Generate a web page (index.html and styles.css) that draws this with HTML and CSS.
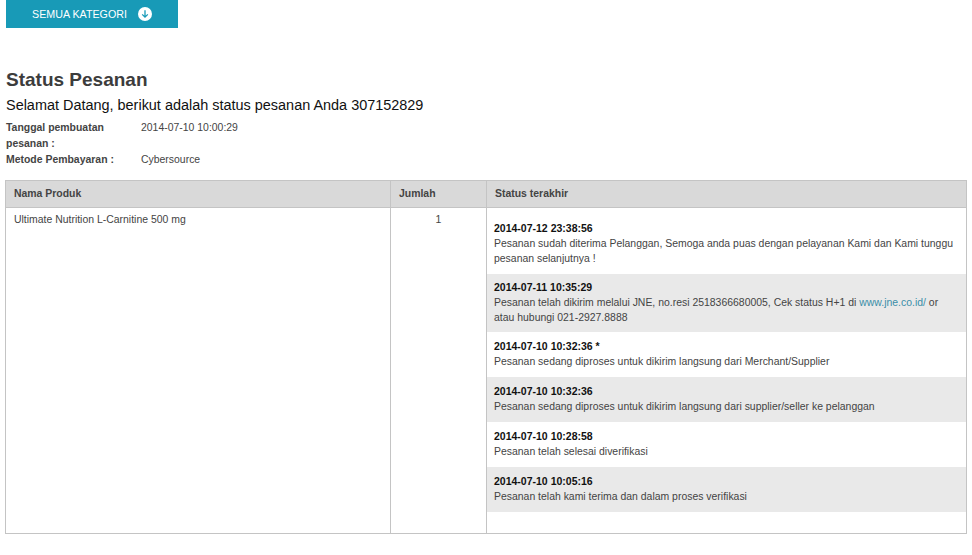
FILE: index.html
```html
<!DOCTYPE html>
<html lang="id">
<head>
<meta charset="utf-8">
<title>Status Pesanan</title>
<link rel="stylesheet" href="styles.css">
</head>
<body>
<div class="page">
  <a class="cat-btn" href="#">
    <span>SEMUA KATEGORI</span>
    <svg class="cat-icon" width="14" height="14" viewBox="0 0 14 14" aria-hidden="true">
      <circle cx="7" cy="7" r="7" fill="#fff"/>
      <path d="M7 3.2V10M4.2 7.4 7 10.2 9.8 7.4" fill="none" stroke="#189ab7" stroke-width="1.3"/>
    </svg>
  </a>
  <h1 class="title">Status Pesanan</h1>
  <p class="welcome">Selamat Datang, berikut adalah status pesanan Anda 307152829</p>
  <dl class="meta">
    <dt>Tanggal pembuatan pesanan :</dt>
    <dd>2014-07-10 10:00:29</dd>
    <dt>Metode Pembayaran :</dt>
    <dd>Cybersource</dd>
  </dl>
  <table class="orders">
    <colgroup>
      <col class="col-name"><col class="col-qty"><col>
    </colgroup>
    <thead>
      <tr><th>Nama Produk</th><th>Jumlah</th><th>Status terakhir</th></tr>
    </thead>
    <tbody>
      <tr>
        <td class="cell">Ultimate Nutrition L-Carnitine 500 mg</td>
        <td class="cell qty">1</td>
        <td class="status-cell">
          <div class="status long"><strong>2014-07-12 23:38:56</strong><p>Pesanan sudah diterima Pelanggan, Semoga anda puas dengan pelayanan Kami dan Kami tunggu pesanan selanjutnya !</p></div>
          <div class="status long alt"><strong>2014-07-11 10:35:29</strong><p>Pesanan telah dikirim melalui JNE, no.resi 2518366680005, Cek status H+1 di <a href="#">www.jne.co.id/</a> or atau hubungi 021-2927.8888</p></div>
          <div class="status"><strong>2014-07-10 10:32:36 *</strong><p>Pesanan sedang diproses untuk dikirim langsung dari Merchant/Supplier</p></div>
          <div class="status alt"><strong>2014-07-10 10:32:36</strong><p>Pesanan sedang diproses untuk dikirim langsung dari supplier/seller ke pelanggan</p></div>
          <div class="status"><strong>2014-07-10 10:28:58</strong><p>Pesanan telah selesai diverifikasi</p></div>
          <div class="status alt"><strong>2014-07-10 10:05:16</strong><p>Pesanan telah kami terima dan dalam proses verifikasi</p></div>
        </td>
      </tr>
    </tbody>
  </table>
</div>
</body>
</html>
```
FILE: styles.css
```css
html, body { margin: 0; padding: 0; background: #fff; }
body { font-family: "Liberation Sans", Arial, sans-serif; font-size: 10.45px; color: #444; }
.page { padding: 0 5px; height: 555px; box-sizing: border-box; overflow: hidden; }
.cat-btn { margin-left: 1px; width: 172px; height: 28px; background: #189ab7; color: #fff; display: flex; align-items: center; justify-content: center; gap: 11px; font-size: 10.7px; text-decoration: none; }
.title { margin: 40px 0 0 1px; font-size: 19px; line-height: 24px; font-weight: bold; color: #3c3c3c; }
.welcome { margin: 4px 0 0 1px; font-size: 14.45px; line-height: 18px; color: #111; }
.meta { margin: 6px 0 0 1px; display: grid; grid-template-columns: 135px 120px; line-height: 16px; }
.meta dt { font-weight: bold; }
.meta dd { margin: 0; }
.orders { margin-top: 12px; width: 962px; table-layout: fixed; border-collapse: collapse; }
.col-name { width: 385px; }
.col-qty { width: 96px; }
.orders th { height: 27px; box-sizing: border-box; padding: 0 8px 2px; background: #d9d9d9; border: 1px solid #c4c4c4; text-align: left; font-weight: bold; }
.orders td { box-sizing: border-box; border: 1px solid #c4c4c4; vertical-align: top; padding: 0; height: 326px; }
.orders .cell { padding: 6px 8px; line-height: 12px; }
.orders .qty { text-align: center; }
.orders .status-cell { padding: 7px 0 21px; }
.status { padding: 7px 8px 8px 7px; line-height: 15px; }
.status.long { padding-top: 6px; padding-bottom: 7px; }
.status:first-child { margin-bottom: 1px; }
.status.alt { background: #e9e9e9; }
.status strong { display: block; color: #111; font-size: 10.5px; }
.status p { margin: 0; }
.status a { color: #3a8ea8; text-decoration: none; }
```
